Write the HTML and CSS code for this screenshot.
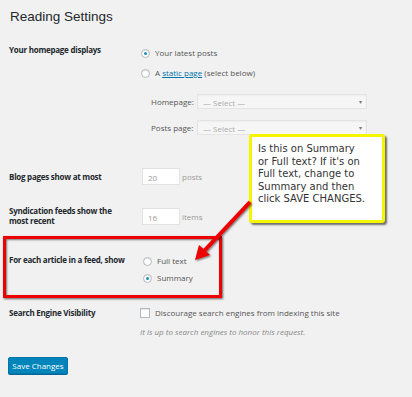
FILE: index.html
```html
<html>
	<head>
		<title>Reading Settings</title>
		<meta name="viewport" content="width=device-width, initial-scale=1.0">
		<link rel="stylesheet" href="styles.css">
	</head>
	<body>
		<div class="wrap">
			<h1 class="title">Reading Settings</h1>
			<div class="row row-home">
				<div class="label">Your homepage displays</div>
				<div class="field">
					<div class="opt"><span class="radio checked"></span>Your latest posts</div>
					<div class="opt"><span class="radio"></span>A&nbsp;<a class="link" href="#">static page</a>&nbsp;(select below)</div>
					<div class="sub">
						<div class="sub-row"><span class="sub-label">Homepage:</span><div class="select">— Select —<span class="caret">▾</span></div></div>
						<div class="sub-row"><span class="sub-label">Posts page:</span><div class="select">— Select —<span class="caret">▾</span></div></div>
					</div>
				</div>
			</div>
			<div class="row row-blog">
				<div class="label">Blog pages show at most</div>
				<div class="field inline"><div class="num">20</div><span class="unit">posts</span></div>
			</div>
			<div class="row row-synd">
				<div class="label">Syndication feeds show the most recent</div>
				<div class="field inline"><div class="num">16</div><span class="unit">items</span></div>
			</div>
			<div class="row row-feed">
				<div class="label">For each article in a feed, show</div>
				<div class="field">
					<div class="opt"><span class="radio"></span>Full text</div>
					<div class="opt"><span class="radio checked"></span>Summary</div>
				</div>
			</div>
			<div class="row row-search">
				<div class="label">Search Engine Visibility</div>
				<div class="field">
					<div class="opt"><span class="check"></span>Discourage search engines from indexing this site</div>
					<div class="note">It is up to search engines to honor this request.</div>
				</div>
			</div>
			<div class="submit"><button class="btn">Save Changes</button></div>
		</div>
		<div class="callout">Is this on Summary<br>or Full text? If it's on<br>Full text, change to<br>Summary and then<br>click SAVE CHANGES.</div>
		<svg class="arrow" width="412" height="397" viewBox="0 0 412 397">
			<defs>
				<filter id="sh" x="-20%" y="-20%" width="140%" height="140%">
					<feDropShadow dx="1" dy="1" stdDeviation="0.8" flood-color="#000" flood-opacity="0.6"/>
				</filter>
			</defs>
			<g filter="url(#sh)">
				<line x1="250" y1="202" x2="204" y2="251" stroke="#ee0000" stroke-width="4"/>
				<polygon points="195,260 199,245 210,255" fill="#ee0000"/>
			</g>
		</svg>
	</body>
</html>
```
FILE: styles.css
```css
body {
	margin: 0;
	background-color: #f1f1f1;
	font-family: "Open Sans", "Noto Sans", sans-serif;
	color: #555;
	font-size: 8px;
}
.wrap {
	padding: 0 9px 0 9px;
	width: 394px;
}
.title {
	margin: 0;
	padding: 9px 0 0 1px;
	height: 19px;
	font-family: "Liberation Sans", Arial, sans-serif;
	font-size: 13.5px;
	font-weight: 400;
	color: #23282d;
}
.row {
	display: grid;
	grid-template-columns: 132px 1fr;
}
.label {
	font-weight: 700;
	color: #23282d;
	line-height: 10px;
	width: 120px;
	letter-spacing: -0.25px;
}
.opt {
	display: flex;
	align-items: center;
	height: 10px;
	line-height: 10px;
}
.radio {
	width: 7px;
	height: 7px;
	border: 1px solid #b4b9be;
	border-radius: 50%;
	background: #fff;
	margin-right: 5px;
	box-shadow: inset 0 1px 1px rgba(0,0,0,0.1);
	display: flex;
	align-items: center;
	justify-content: center;
}
.radio.checked::after {
	content: "";
	width: 3px;
	height: 3px;
	border-radius: 50%;
	background: #1e8cbe;
}
.check {
	width: 8px;
	height: 8px;
	border: 1px solid #b4b9be;
	background: #fff;
	margin-right: 5px;
	box-shadow: inset 0 1px 1px rgba(0,0,0,0.1);
}
.link {
	color: #0073aa;
}
.row-home {
	padding-top: 17px;
}
.row-home .opt {
	margin-top: 3px;
	margin-bottom: 10px;
}
.sub {
	padding: 6px 0 0 10px;
}
.sub-row {
	display: flex;
	align-items: center;
	margin-bottom: 11px;
}
.sub-label {
	width: 46px;
}
.select {
	width: 170px;
	height: 15px;
	line-height: 15px;
	background: #f6f6f6;
	border: 1px solid #e4e4e4;
	color: #aaa;
	padding-left: 5px;
	position: relative;
	box-sizing: border-box;
	box-shadow: inset 0 1px 2px rgba(0,0,0,0.04);
}
.caret {
	position: absolute;
	right: 4px;
	top: 0;
	font-size: 6px;
	color: #777;
}
.inline {
	display: flex;
	align-items: center;
}
.num {
	width: 38px;
	height: 17px;
	line-height: 17px;
	box-sizing: border-box;
	background: #fff;
	border: 1px solid #e2e2e2;
	padding-left: 5px;
	color: #999;
	margin-left: 1px;
	margin-right: 2px;
}
.unit {
	color: #999;
}
.row-blog {
	padding-top: 22px;
	align-items: center;
}
.row-synd {
	padding-top: 21px;
	align-items: center;
}
.row-feed {
	margin: 10px 0 0 -6px;
	width: 219px;
	height: 62px;
	box-sizing: border-box;
	border: 3px solid #ee0000;
	box-shadow: 1px 1px 2px rgba(0,0,0,0.6), inset 1px 1px 2px rgba(0,0,0,0.5);
	padding: 16px 0 0 3px;
	grid-template-columns: 134px 1fr;
}
.row-feed .label {
	width: auto;
	white-space: nowrap;
}
.row-feed .opt {
	margin-top: 1px;
	margin-bottom: 7px;
}
.row-search {
	padding-top: 10px;
}
.row-search .field {
	margin-left: -1px;
}
.note {
	font-style: italic;
	color: #888;
	margin-top: 8px;
}
.submit {
	padding-top: 20px;
}
.btn {
	background: #0085ba;
	border: 1px solid #0073aa;
	border-radius: 2px;
	color: #fff;
	font-family: "Open Sans", "Noto Sans", sans-serif;
	font-size: 8px;
	height: 17px;
	width: 60px;
	padding: 0;
	margin-left: -1px;
	box-shadow: 0 1px 0 #006799;
}
.callout {
	position: absolute;
	left: 249px;
	top: 134px;
	width: 136px;
	height: 89px;
	box-sizing: border-box;
	background: #fff;
	border: 3px solid #f5f500;
	border-radius: 3px;
	box-shadow: 2px 2px 2px rgba(0,0,0,0.55);
	padding: 6px 0 0 6px;
	font-family: "DejaVu Sans", Verdana, sans-serif;
	font-size: 10px;
	line-height: 12.5px;
	color: #333;
	white-space: nowrap;
}
.arrow {
	position: absolute;
	left: 0;
	top: 0;
	pointer-events: none;
}
```
